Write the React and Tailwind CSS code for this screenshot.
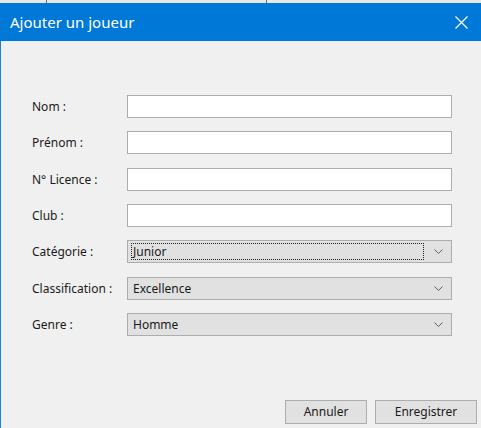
import { useState } from 'react'

const textFields = [
  { label: 'Nom :', mt: 'mt-0' },
  { label: 'Prénom :', mt: 'mt-[13px]' },
  { label: 'N° Licence :', mt: 'mt-[14px]' },
  { label: 'Club :', mt: 'mt-[13px]' },
]

const selectFields = [
  { label: 'Catégorie :', value: 'Junior', focused: true, mt: 'mt-[13px]' },
  { label: 'Classification :', value: 'Excellence', mt: 'mt-[14px]' },
  { label: 'Genre :', value: 'Homme', mt: 'mt-[13px]' },
]

function Chevron() {
  return (
    <svg width="9" height="5" viewBox="0 0 9 5" className="shrink-0">
      <path d="M0.5 0.5 L4.5 4.5 L8.5 0.5" fill="none" stroke="#606060" strokeWidth="1" />
    </svg>
  )
}

export default function App() {
  const [values, setValues] = useState({})

  return (
    <div className="w-[481px] h-[428px] overflow-hidden bg-[#f0f0f0] flex flex-col" style={{ fontFamily: '"Noto Sans", "Open Sans", sans-serif' }}>
      {/* fenêtre derrière */}
      <div className="h-[3px] shrink-0 bg-[#e8e8e8] flex">
        <div className="w-[47px] border-r border-[#6b6b6b]" />
        <div className="w-[220px] border-r border-[#6b6b6b]" />
      </div>

      {/* barre de titre */}
      <div className="h-[38px] shrink-0 bg-[#0078d7] flex items-center justify-between pl-[10px] pr-[13px]">
        <span className="text-white text-[15px]">Ajouter un joueur</span>
        <svg width="13" height="13" viewBox="0 0 13 13">
          <path d="M0.5 0.5 L12.5 12.5 M12.5 0.5 L0.5 12.5" stroke="white" strokeWidth="1.2" />
        </svg>
      </div>

      <div className="flex-1 border-l border-[#1883d7] flex flex-col text-[12px] text-[#1a1a1a]">
        <div className="flex flex-col pt-[54px] pl-[31px] pr-[29px]">
          {textFields.map((f) => (
            <div key={f.label} className={`flex items-center h-[23px] ${f.mt}`}>
              <span className="w-[95px]">{f.label}</span>
              <input
                className="flex-1 h-[23px] bg-white border border-[#adadad] outline-none px-1 text-[12px]"
                value={values[f.label] || ''}
                onChange={(e) => setValues({ ...values, [f.label]: e.target.value })}
              />
            </div>
          ))}
          {selectFields.map((f) => (
            <div key={f.label} className={`flex items-center h-[23px] ${f.mt}`}>
              <span className="w-[95px]">{f.label}</span>
              <div className="flex-1 h-[23px] bg-[#e1e1e1] border border-[#adadad] flex items-center pl-[3px] pr-[8px]">
                <div className={`flex-1 h-[17px] flex items-center pl-[1px] mr-[10px] ${f.focused ? 'border border-dotted border-[#202020]' : 'border border-transparent'}`}>
                  {f.value}
                </div>
                <Chevron />
              </div>
            </div>
          ))}
        </div>

        <div className="mt-auto flex justify-end gap-[8px] pr-[4px] pb-[4px]">
          <button className="w-[82px] h-[24px] bg-[#e1e1e1] border border-[#adadad] text-[12px]">Annuler</button>
          <button className="w-[102px] h-[24px] bg-[#e1e1e1] border border-[#adadad] text-[12px]">Enregistrer</button>
        </div>
      </div>
    </div>
  )
}
